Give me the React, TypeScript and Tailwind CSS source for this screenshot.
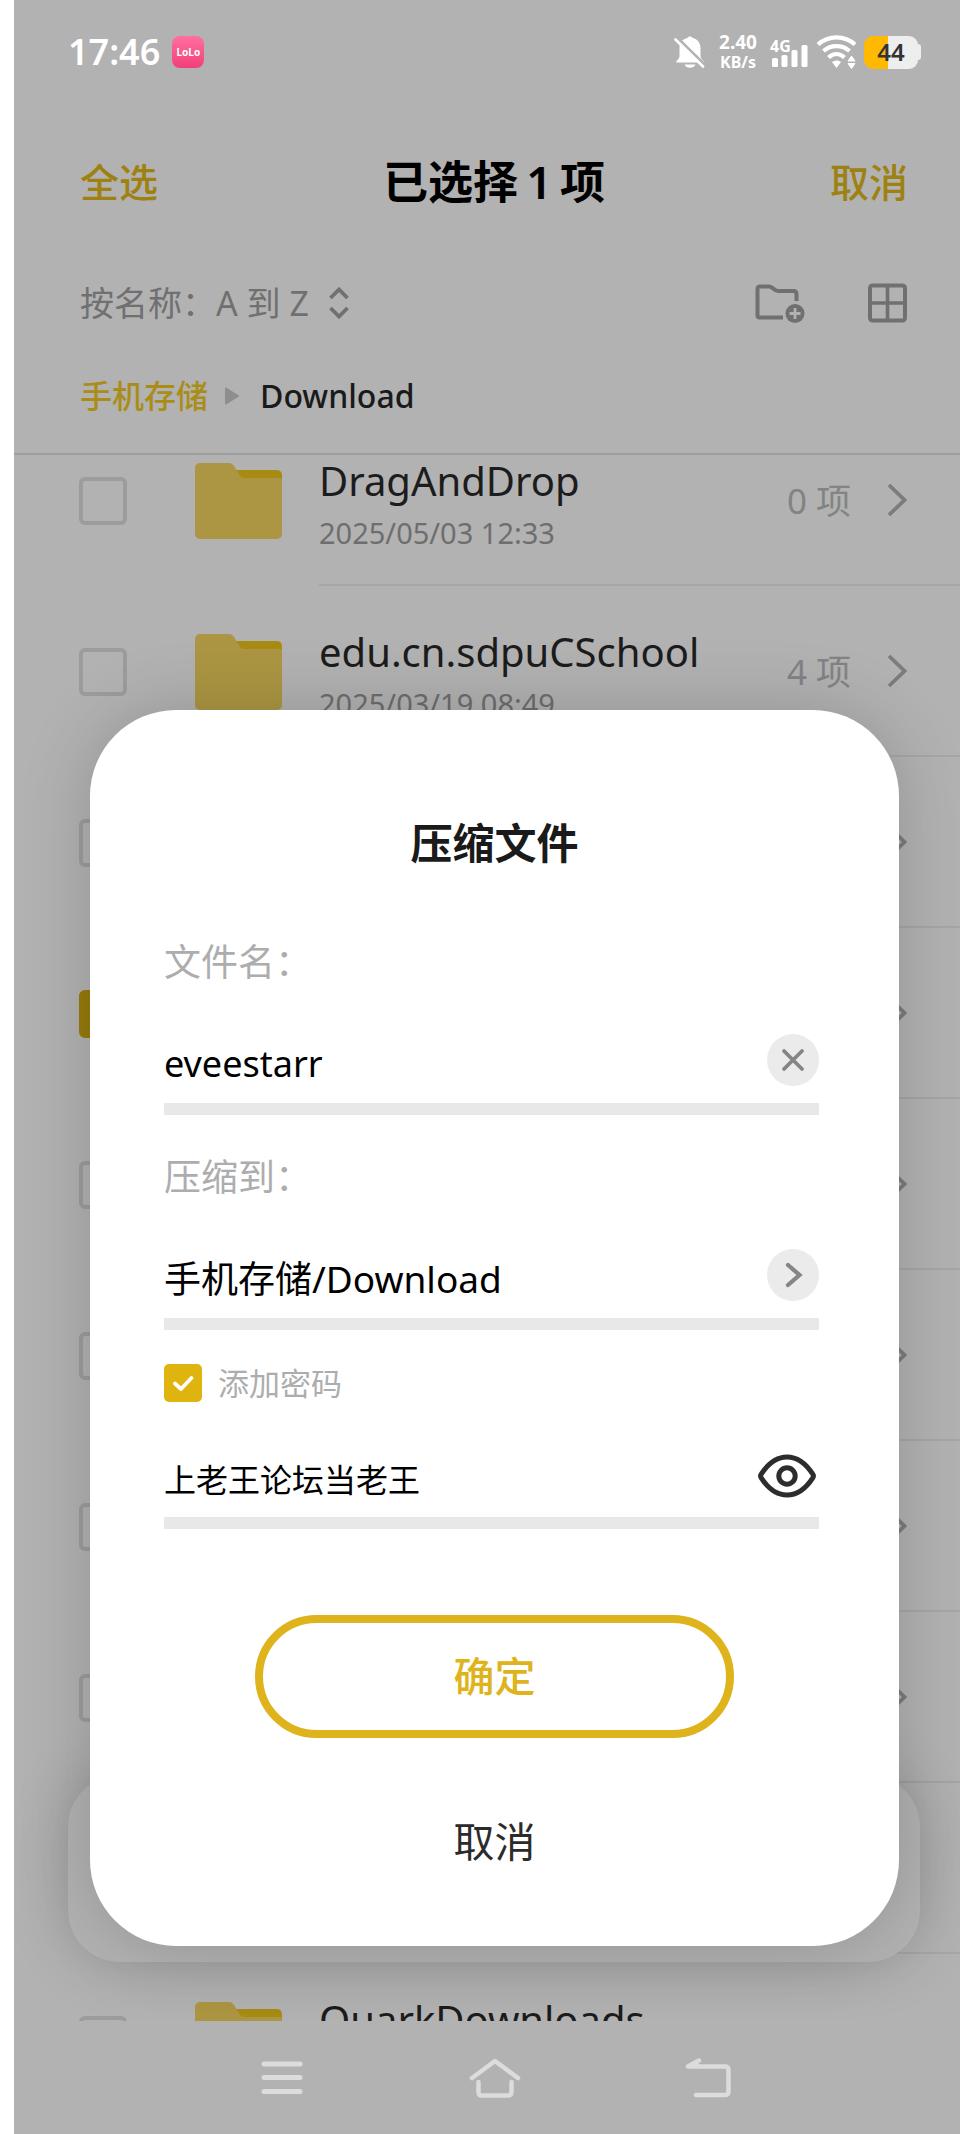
import { useState } from 'react'

type Entry = {
  id: number
  name?: string
  date?: string
  count?: string
  checked?: boolean
}

const entries: Entry[] = [
  { id: 1, name: 'DragAndDrop', date: '2025/05/03 12:33', count: '0 项' },
  { id: 2, name: 'edu.cn.sdpuCSchool', date: '2025/03/19 08:49', count: '4 项' },
  { id: 3 },
  { id: 4, checked: true },
  { id: 5 },
  { id: 6 },
  { id: 7 },
  { id: 8 },
  { id: 9 },
  { id: 10, name: 'QuarkDownloads' },
]

function StatusBar() {
  return (
    <div className="flex h-[104px] shrink-0 items-center pl-[54px] pr-[39px] text-white">
      <span className="text-[36px] leading-none font-semibold">17:46</span>
      <span className="ml-3 flex h-8 w-8 items-center justify-center rounded-lg bg-linear-to-b from-[#ff6f9f] to-[#f23d78] text-[10px] font-bold">
        LoLo
      </span>
      <div className="ml-auto flex items-center">
        <svg width="32" height="34" viewBox="0 0 32 34" aria-hidden>
          <path
            d="M16 1.500c1.300 0 2.200.6 2.600 1.600C23.500 4.300 26.500 8 26.500 13v7.500c0 2.500 1 3.800 3 5.500v1.500H2.500V26c2-1.700 3-3 3-5.500V13c0-5 3-8.700 7.900-9.900.4-1 1.300-1.600 2.600-1.600Z"
            fill="#fff"
          />
          <path d="M10.500 29.500h11c-1 2.300-3 3.300-5.500 3.300s-4.500-1-5.500-3.300Z" fill="#fff" />
          <path d="M3.500 3 31 30" stroke="#b2b2b2" strokeWidth="3" />
          <path d="M1.500 4.500 29 31.500" stroke="#fff" strokeWidth="2.600" strokeLinecap="round" />
        </svg>
        <div className="ml-2.5 flex w-[44px] flex-col items-center font-bold">
          <span className="text-[19px] leading-5">2.40</span>
          <span className="text-[16px] leading-5">KB/s</span>
        </div>
        <div className="ml-[10px] flex flex-col">
          <span className="-mb-3 text-[16px] leading-[20px] font-bold">4G</span>
          <svg width="38" height="24" viewBox="0 0 38 24" fill="#fff" aria-hidden>
            <rect x="2" y="14" width="6" height="9" rx="1.500" />
            <rect x="11.500" y="11" width="6" height="12" rx="1.500" />
            <rect x="21.500" y="6" width="6" height="17" rx="1.500" />
            <rect x="31.500" y="1" width="6" height="22" rx="1.500" />
          </svg>
        </div>
        <svg className="ml-2" width="42" height="34" viewBox="0 0 42 34" fill="none" aria-hidden>
          <g stroke="#fff" strokeWidth="4.200">
            <path d="M2 9.500C12.500 0 28.500 0 39 9.500" />
            <path d="M7.500 16C15 9.500 26 9.500 33.500 16" />
            <path d="M12.500 22.500C17.500 18 23.500 18 28.500 22.500" />
          </g>
          <path d="M16 27c2.800-2 6.200-2 9 0l-4.500 6Z" fill="#fff" />
          <path d="m35.500 21 3.500 5h-7ZM35.500 33.500l3.500-5h-7Z" fill="#fff" stroke="#fff" strokeWidth="1" />
        </svg>
        <div className="ml-1.5 flex items-center">
          <span className="flex h-[33px] w-[54px] items-center justify-center rounded-[9px] bg-linear-to-r from-[#ffb900] from-44% to-[#eeeeee] to-44% text-[24px] leading-none font-semibold text-[#333]">
            44
          </span>
          <span className="h-4 w-[3px] rounded-r-sm bg-[#eee]" />
        </div>
      </div>
    </div>
  )
}

function FolderIcon() {
  return (
    <svg width="87" height="76" viewBox="0 0 87 76" aria-hidden>
      <path d="M30 7h52a5 5 0 0 1 5 5v20H30Z" fill="#a78b13" />
      <path
        d="M5 0h29c2.500 0 3.500 1 5 3l5 8c1.500 2.500 3 4 6 4h35c1.200 0 2 .8 2 2v54a5 5 0 0 1-5 5H5a5 5 0 0 1-5-5V5a5 5 0 0 1 5-5Z"
        fill="#ac9643"
      />
    </svg>
  )
}

function FileRow({ entry }: { entry: Entry }) {
  return (
    <li className="flex h-[171px] shrink-0 items-center pl-[65px]">
      <input
        type="checkbox"
        defaultChecked={entry.checked}
        aria-label={entry.name ?? '选择'}
        className="h-12 w-12 shrink-0 appearance-none rounded-md border-4 border-[#9c9c9c] checked:border-[#967b0c] checked:bg-[#967b0c]"
      />
      <span className="ml-[68px] shrink-0">
        <FolderIcon />
      </span>
      <div className="ml-[37px] flex flex-1 items-center self-stretch border-b-2 border-[#a6a6a6] pr-[53px]">
        <div className="self-start pt-[42px]">
          <p className="text-[40px] leading-[48px] text-[#1c1c1c]">{entry.name}</p>
          <p className="mt-2 text-[29px] leading-10 text-[#6e6e6e]">{entry.date}</p>
        </div>
        <span className="ml-auto pt-1 text-[35px] text-[#838383]">{entry.count}</span>
        <svg className="ml-9" width="20" height="34" viewBox="0 0 20 34" fill="none" aria-hidden>
          <path d="m2 2 15.500 15L2 32" stroke="#7c7c7c" strokeWidth="3.800" />
        </svg>
      </div>
    </li>
  )
}

function Browser() {
  return (
    <>
      <header className="shrink-0 border-b-2 border-[#9e9e9e] pr-[52px] pl-[66px]">
        <div className="flex h-[156px] items-center justify-between">
          <button type="button" className="text-[39px] font-medium text-[#9d8111]">全选</button>
          <h1 className="text-[45px] font-semibold text-black">
            已选择<span className="mx-2">1</span>项
          </h1>
          <button type="button" className="text-[39px] font-medium text-[#9d8111]">取消</button>
        </div>
        <div className="flex h-[86px] items-center text-[#707070]">
          <button type="button" className="flex items-center gap-5 text-[34px]">
            按名称：A 到 Z
            <svg width="20" height="32" viewBox="0 0 20 32" fill="none" stroke="currentColor" strokeWidth="3.800" aria-hidden>
              <path d="m1.500 11 8.500-8.500 8.500 8.500M1.500 21l8.500 8.500 8.500-8.500" />
            </svg>
          </button>
          <button type="button" aria-label="新建文件夹" className="ml-auto">
            <svg width="50" height="40" viewBox="0 0 50 40" fill="none" aria-hidden>
              <path
                d="M28 34.500H4.500a2 2 0 0 1-2-2V5.500a2 2 0 0 1 2-2H14c4 0 5 4.500 9 4.500h16a2.500 2.500 0 0 1 2.500 2.500V18"
                stroke="currentColor"
                strokeWidth="4"
              />
              <circle cx="40" cy="30.500" r="9.500" fill="currentColor" />
              <path d="M40 25v11M34.500 30.500h11" stroke="#b2b2b2" strokeWidth="2.800" />
            </svg>
          </button>
          <button type="button" aria-label="网格" className="ml-[62px]">
            <svg width="41" height="40" viewBox="0 0 41 40" fill="none" stroke="currentColor" aria-hidden>
              <rect x="3" y="2.500" width="35" height="35" rx="2.500" strokeWidth="4" />
              <path d="M20.500 2v36M3 20h35" strokeWidth="3.600" />
            </svg>
          </button>
        </div>
        <nav className="mb-[7px] flex h-[100px] items-center text-[32px] font-medium">
          <a href="#" className="text-[#a98d16]">手机存储</a>
          <svg className="ml-4" width="16" height="18" viewBox="0 0 16 18" aria-hidden>
            <path d="M2 1.500 14 9 2 16.500Z" fill="#8e8e8e" stroke="#8e8e8e" strokeWidth="2" strokeLinejoin="round" />
          </svg>
          <span className="ml-5 text-[#1a1a1a]">Download</span>
        </nav>
      </header>
      <div className="relative min-h-0 flex-1 overflow-hidden">
        <ul className="-mt-10 flex flex-col">
          {entries.map((entry) => (
            <FileRow key={entry.id} entry={entry} />
          ))}
        </ul>
        {/* action bar that floats over the list */}
        <div className="absolute right-10 bottom-[59px] left-[54px] h-[187px] rounded-[52px] bg-[#b2b2b2] shadow-[0_0_60px_rgba(0,0,0,0.17)]" />
      </div>
    </>
  )
}

function SystemNav() {
  return (
    <nav className="flex h-[113px] shrink-0 items-center justify-center gap-[161px] pl-[15px] text-[#dcdcdc]">
      <button type="button" aria-label="菜单">
        <svg width="52" height="40" viewBox="0 0 52 40" fill="none" stroke="currentColor" strokeWidth="5" strokeLinecap="round" aria-hidden>
          <path d="M8 6h36M8 19.500h36M8 33.500h36" />
        </svg>
      </button>
      <button type="button" aria-label="主屏幕">
        <svg width="52" height="40" viewBox="0 0 52 40" fill="none" stroke="currentColor" strokeWidth="4.500" strokeLinecap="round" strokeLinejoin="round" aria-hidden>
          <path d="M3 20 26 3l23 17" />
          <path d="M9.500 24v10c0 2 1.200 3.500 3.500 3.500h26c2.300 0 3.500-1.500 3.500-3.500V24" />
        </svg>
      </button>
      <button type="button" aria-label="返回">
        <svg width="52" height="40" viewBox="0 0 52 40" fill="none" stroke="currentColor" strokeWidth="4.500" strokeLinecap="round" strokeLinejoin="round" aria-hidden>
          <path d="M17 2.500 6 8.500h37c2 0 3.500 1.200 3.500 3.500v21.500c0 2.300-1.500 3.500-3.500 3.500H14" />
          <path d="m15 3 1 5H7Z" fill="currentColor" strokeWidth="2" />
        </svg>
      </button>
    </nav>
  )
}

function CompressDialog() {
  const [fileName, setFileName] = useState('eveestarr')
  const [password, setPassword] = useState('上老王论坛当老王')

  return (
    <form
      role="dialog"
      aria-labelledby="dialog-title"
      className="flex flex-1 flex-col rounded-[86px] bg-white px-[74px] pt-[105px] pb-[77px] shadow-[0_0_70px_rgba(0,0,0,0.18)]"
    >
      <h2 id="dialog-title" className="text-center text-[42px] leading-[56px] font-semibold text-[#1a1a1a]">
        压缩文件
      </h2>

      <div className="mr-1.5 flex flex-col">
        <label htmlFor="file-name" className="mt-[67px] text-[37px] leading-[48px] text-[#adadad]">
          文件名：
        </label>
        <div className="mt-12 flex items-center border-b-12 border-[#e8e8e8] pb-[17px]">
          <input
            id="file-name"
            value={fileName}
            onChange={(e) => setFileName(e.target.value)}
            className="h-[52px] min-w-0 flex-1 pt-2 text-[36px] text-black outline-none"
          />
          <button
            type="button"
            aria-label="清除"
            onClick={() => setFileName('')}
            className="flex h-[52px] w-[52px] items-center justify-center rounded-full bg-[#ebebeb]"
          >
            <svg width="24" height="24" viewBox="0 0 24 24" fill="none" stroke="#858585" strokeWidth="3.800" strokeLinecap="round" aria-hidden>
              <path d="m3 3 18 18M21 3 3 21" />
            </svg>
          </button>
        </div>

        <span className="mt-[38px] text-[37px] leading-[48px] text-[#adadad]">压缩到：</span>
        <button type="button" className="mt-12 flex items-center border-b-12 border-[#e8e8e8] pb-[17px] text-left">
          <span className="h-[52px] flex-1 pt-2 text-[37px] leading-[44px] text-black">手机存储/Download</span>
          <span className="flex h-[52px] w-[52px] items-center justify-center rounded-full bg-[#ebebeb]">
            <svg width="24" height="26" viewBox="0 0 24 26" fill="none" stroke="#858585" strokeWidth="4.200" strokeLinecap="round" aria-hidden>
              <path d="m7 3 11.500 10L7 23" />
            </svg>
          </span>
        </button>

        <label className="relative mt-[34px] flex h-[38px] items-center gap-4 self-start text-[31px] text-[#adadad]">
          <input type="checkbox" defaultChecked className="peer h-[38px] w-[38px] appearance-none rounded-[5px] border-2 border-[#e0b40f] checked:bg-[#e0b40f]" />
          <svg className="absolute top-0 left-0 hidden peer-checked:block" width="38" height="38" viewBox="0 0 38 38" fill="none" aria-hidden>
            <path d="m11 19.500 6 5.500 10.500-11" stroke="#fff" strokeWidth="3.800" strokeLinecap="round" strokeLinejoin="round" />
          </svg>
          添加密码
        </label>
        <div className="mt-[46px] flex items-center border-b-12 border-[#e8e8e8] pb-[17px]">
          <input
            aria-label="密码"
            value={password}
            onChange={(e) => setPassword(e.target.value)}
            className="h-[52px] min-w-0 flex-1 pt-2 text-[32px] text-black outline-none"
          />
          <button type="button" aria-label="显示密码" className="mr-0.5 pt-1">
            <svg width="60" height="44" viewBox="0 0 60 44" fill="none" stroke="#2d2d2d" strokeWidth="5" aria-hidden>
              <path d="M4.200 20.200C11.500 9 20.500 3 30 3s18.500 6 25.800 17.200c.9 1.300.9 2.300 0 3.600C48.500 35 39.500 41 30 41S11.500 35 4.200 23.800c-.9-1.300-.9-2.300 0-3.600Z" />
              <circle cx="30" cy="22" r="8.200" />
            </svg>
          </button>
        </div>
      </div>

      <button
        type="submit"
        className="mx-[91px] mt-[86px] h-[123px] rounded-full border-8 border-[#deb31b] text-[41px] font-medium text-[#deb31b]"
      >
        确定
      </button>
      <button type="button" className="mx-auto mt-[75px] text-[41px] leading-[56px] text-[#2b2b2b]">
        取消
      </button>
    </form>
  )
}

export default function App() {
  return (
    <div className="h-screen overflow-hidden bg-white pl-3.5 font-['Noto_Sans','Noto_Sans_CJK_SC',sans-serif]" lang="zh-CN">
      <main className="relative flex h-full flex-col overflow-hidden bg-[#b2b2b2]">
        <StatusBar />
        <Browser />
        <SystemNav />
        <div className="absolute inset-x-0 bottom-0 flex pr-[61px] pb-[188px] pl-[76px]">
          <CompressDialog />
        </div>
      </main>
    </div>
  )
}
